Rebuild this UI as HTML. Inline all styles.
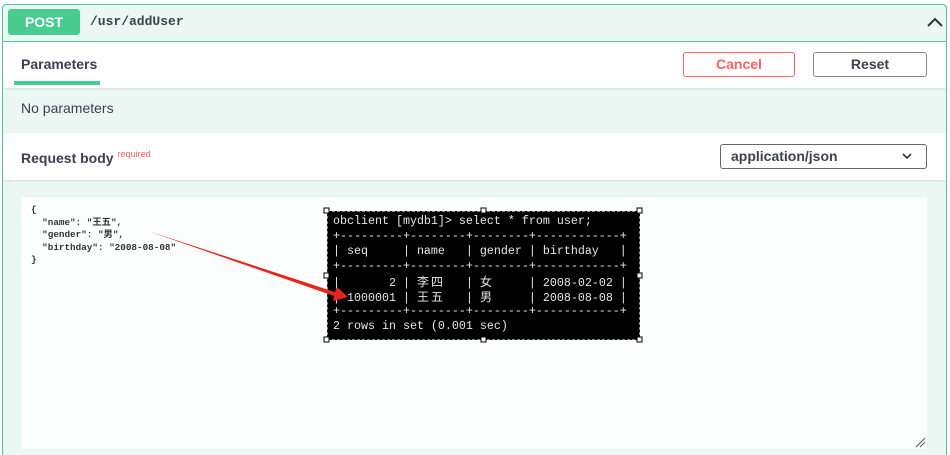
<!DOCTYPE html><html><head><meta charset="utf-8"><style>
*{margin:0;padding:0;box-sizing:border-box}
html{width:950px;height:455px;overflow:hidden}
body{width:950px;height:455px;background:#fff;position:relative;overflow:hidden;font-family:"Liberation Sans","Noto Sans CJK SC",sans-serif}
.box{position:absolute;left:2px;top:4px;width:945px;height:451px;border:1px solid #49cc90;border-bottom:none;border-radius:4px 4px 0 0;background:#ebf7f2}
.a{position:absolute}
.mono{font-family:"Liberation Mono","Noto Sans CJK SC",monospace}
.t{position:absolute;left:333px;font-family:"Liberation Mono",monospace;font-size:11.67px;color:#e6e6e6;white-space:pre;line-height:15px}
.c{display:inline-block;width:14px;font-family:"Noto Sans CJK SC",sans-serif;font-size:12px}
</style></head><body>
<div class="box"></div>
<div class="a" style="left:3px;top:41px;width:943px;height:1px;background:#49cc90"></div>
<div class="a" style="left:8px;top:9px;width:72px;height:26px;background:#49cc90;border-radius:3px;color:#fff;font-weight:bold;font-size:14px;text-align:center;line-height:26px">POST</div>
<div class="a mono" style="left:90px;top:14px;font-size:13px;font-weight:bold;color:#3b4151">/usr/addUser</div>
<svg class="a" style="left:927px;top:17px" width="16" height="10"><path d="M1 9L8 2L15 9" stroke="#333" stroke-width="2" fill="none"/></svg>
<div class="a" style="left:3px;top:42px;width:943px;height:46px;background:#fff;box-shadow:0 1px 2px rgba(0,0,0,.1)"></div>
<div class="a" style="left:21px;top:56px;font-size:14px;font-weight:bold;color:#3b4151">Parameters</div>
<div class="a" style="left:14px;top:81px;width:86px;height:4px;background:#49cc90"></div>
<div class="a" style="left:683px;top:52px;width:112px;height:25px;border:1px solid #ff6060;border-radius:3px;color:#ff6060;font-weight:bold;font-size:14px;text-align:center;line-height:23px">Cancel</div>
<div class="a" style="left:813px;top:52px;width:114px;height:25px;border:1px solid #888;border-radius:3px;color:#3b4151;font-weight:bold;font-size:14px;text-align:center;line-height:23px;background:#fff">Reset</div>
<div class="a" style="left:21px;top:100px;font-size:14px;color:#3b4151">No parameters</div>
<div class="a" style="left:3px;top:133px;width:943px;height:47px;background:#fff;box-shadow:0 1px 2px rgba(0,0,0,.1)"></div>
<div class="a" style="left:21px;top:149px;font-size:14px;font-weight:bold;color:#3b4151">Request body <span style="font-size:9px;color:#ff6060;font-weight:normal;vertical-align:6px">required</span></div>
<div class="a" style="left:720px;top:144px;width:207px;height:25px;border:1px solid #666;border-radius:3px;background:#fff;font-size:14px;font-weight:bold;color:#3b4151;padding-left:10px;line-height:23px">application/json</div>
<svg class="a" style="left:902px;top:153px" width="10" height="7"><path d="M1 1L5 5L9 1" stroke="#333" stroke-width="1.6" fill="none"/></svg>
<div class="a" style="left:21px;top:197px;width:906px;height:252px;background:#fcfefd"></div>
<svg class="a" style="left:915px;top:437px" width="11" height="11"><path d="M1 10L10 1M5 10L10 5" stroke="#555" stroke-width="1"/></svg>
<pre class="a" style="left:31px;top:204px;font-size:9.3px;line-height:12.5px;color:#333;font-family:'Liberation Mono','Noto Sans CJK SC',monospace;font-weight:bold">{
  "name": "王五",
  "gender": "男",
  "birthday": "2008-08-08"
}</pre>
<div class="a" style="left:327px;top:211px;width:313px;height:129px;background:#000;border:1px dashed #888"></div>
<div class="t" style="top:214px">obclient [mydb1]&gt; select * from user;</div>
<div class="t" style="top:229px">+---------+--------+--------+------------+</div>
<div class="t" style="top:244px">| seq     | name   | gender | birthday   |</div>
<div class="t" style="top:259px">+---------+--------+--------+------------+</div>
<div class="t" style="top:274px">|       2 | <span class="c">李</span><span class="c">四</span>   | <span class="c">女</span>     | 2008-02-02 |</div>
<div class="t" style="top:289px">| 1000001 | <span class="c">王</span><span class="c">五</span>   | <span class="c">男</span>     | 2008-08-08 |</div>
<div class="t" style="top:304px">+---------+--------+--------+------------+</div>
<div class="t" style="top:319px">2 rows in set (0.001 sec)</div>
<svg class="a" style="left:0;top:0" width="950" height="455">
<g fill="#fff" stroke="#000" stroke-width="1"><rect x="324" y="208" width="5" height="5"/><rect x="481" y="208" width="5" height="5"/><rect x="637" y="208" width="5" height="5"/><rect x="324" y="273" width="5" height="5"/><rect x="637" y="273" width="5" height="5"/><rect x="324" y="337" width="5" height="5"/><rect x="481" y="337" width="5" height="5"/><rect x="637" y="337" width="5" height="5"/></g>
<path d="M148 231L335 292L337 287L348 297L333 301L334 296Z" fill="#e3261c"/>
</svg>
</body></html>
